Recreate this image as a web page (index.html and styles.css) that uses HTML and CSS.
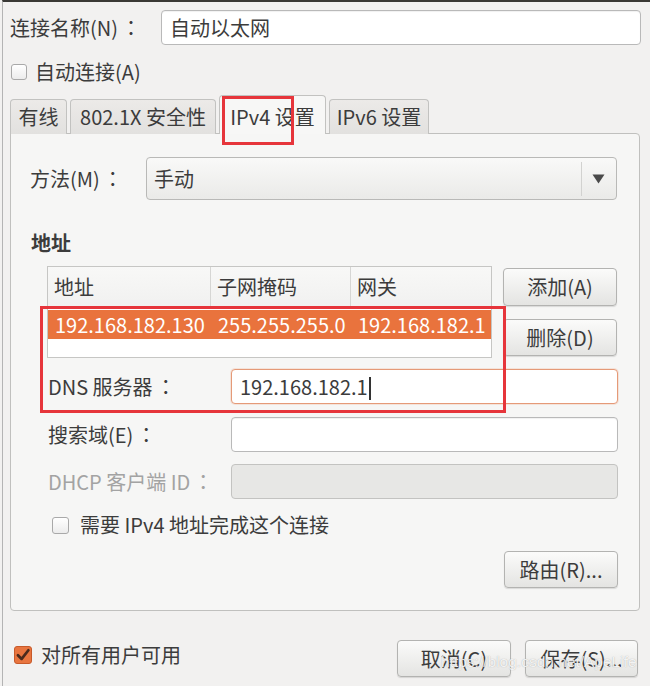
FILE: index.html
```html
<!DOCTYPE html>
<html lang="zh-CN">
<head>
<meta charset="utf-8">
<link rel="stylesheet" href="styles.css">
</head>
<body>
<div class="window">
  <div class="row-name">
    <div class="lbl lbl-name">连接名称(N)<span class="colon" lang="ja">：</span></div>
    <div class="entry entry-name">自动以太网</div>
  </div>
  <div class="row-auto">
    <span class="check"></span>
    <span class="lbl">自动连接(A)</span>
  </div>
  <div class="tabs">
    <div class="tab tab-wired">有线</div>
    <div class="tab tab-8021x">802.1X 安全性</div>
    <div class="tab tab-active">IPv4 设置</div>
    <div class="tab tab-ipv6">IPv6 设置</div>
  </div>
  <div class="panel">
    <div class="row-method">
      <div class="lbl lbl-method">方法(M)<span class="colon" lang="ja">：</span></div>
      <div class="combo">
        <span class="combo-text">手动</span>
        <span class="combo-sep"></span>
        <svg class="combo-arrow" width="13" height="10" viewBox="0 0 13 10"><path d="M0.5 0.5 H12.5 L6.5 9.5 Z" fill="#4a4a4a"/></svg>
      </div>
    </div>
    <div class="heading">地址</div>
    <div class="addr">
      <div class="table">
        <div class="thead">
          <div class="th th-addr">地址</div>
          <div class="th th-mask">子网掩码</div>
          <div class="th th-gw">网关</div>
        </div>
        <div class="trow">
          <div class="td td-addr">192.168.182.130</div>
          <div class="td td-mask">255.255.255.0</div>
          <div class="td td-gw">192.168.182.1</div>
        </div>
      </div>
      <div class="addr-btns">
        <div class="btn btn-add">添加(A)</div>
        <div class="btn btn-del">删除(D)</div>
      </div>
    </div>
    <div class="frow frow-dns">
      <div class="lbl flbl">DNS 服务器<span class="colon" lang="ja">：</span></div>
      <div class="entry fentry focus">192.168.182.1<span class="caret"></span></div>
    </div>
    <div class="frow frow-search">
      <div class="lbl flbl">搜索域(E)<span class="colon" lang="ja">：</span></div>
      <div class="entry fentry"></div>
    </div>
    <div class="frow frow-dhcp">
      <div class="lbl flbl disabled">DHCP 客户端 ID<span class="colon" lang="ja">：</span></div>
      <div class="entry fentry entry-disabled"></div>
    </div>
    <div class="row-require">
      <span class="check"></span>
      <span class="lbl">需要 IPv4 地址完成这个连接</span>
    </div>
    <div class="row-route">
      <div class="btn btn-route">路由(R)...</div>
    </div>
  </div>
  <div class="bottom">
    <div class="bottom-left">
      <span class="check checked"><svg width="18" height="18" viewBox="0 0 16 16"><path d="M3.5 8.2 L6.8 11.5 L12.8 3.8" fill="none" stroke="#4a2a1c" stroke-width="2.4" stroke-linecap="round" stroke-linejoin="round"/></svg></span>
      <span class="lbl">对所有用户可用</span>
    </div>
    <div class="bottom-btns">
      <div class="btn btn-cancel">取消(C)</div>
      <div class="btn btn-save">保存(S)...</div>
    </div>
  </div>
  <div class="mark mark-tab"></div>
  <div class="mark mark-addr"></div>
  <div class="watermark">https://blog.csdn.net/ApeLife</div>
</div>
</body>
</html>
```

FILE: styles.css
```css
html, body {
  margin: 0;
  padding: 0;
}
body {
  width: 650px;
  height: 686px;
  overflow: hidden;
  background: #f2f1f0;
  font-family: "Noto Sans CJK SC", "Noto Sans", "DejaVu Sans", sans-serif;
  font-size: 20px;
  color: #3c3c3c;
}
.window {
  position: relative;
  box-sizing: border-box;
  height: 686px;
  margin-left: 2px;
  border-top: 2px solid #3a3935;
  border-left: 1px solid #b4b4b4;
  padding: 8px 10px 0 7px;
}
.lbl {
  line-height: 24px;
  white-space: nowrap;
}
.colon {
  font-family: "Noto Sans CJK JP", "Noto Sans CJK SC", sans-serif;
  margin-left: 3px;
}
.disabled {
  color: #a3a3a3;
}
.entry {
  box-sizing: border-box;
  height: 35px;
  border: 1px solid #b9b9b9;
  border-radius: 4px;
  background: #ffffff;
  box-shadow: inset 0 1px 1px rgba(0,0,0,0.06);
  padding: 0 8px;
  line-height: 33px;
  color: #3c3c3c;
  white-space: nowrap;
}
.row-name {
  display: flex;
  align-items: center;
  height: 35px;
}
.lbl-name {
  width: 151px;
  flex: none;
}
.entry-name {
  flex: 1;
  margin-right: -1px;
}
.row-auto {
  display: flex;
  align-items: center;
  height: 34px;
  margin-top: 10px;
  padding-left: 1px;
}
.check {
  position: relative;
  box-sizing: border-box;
  width: 16px;
  height: 16px;
  flex: none;
  border: 1px solid #a9a9a9;
  border-radius: 3px;
  background: linear-gradient(#ffffff, #ececec);
  margin-right: 8px;
}
.check.checked {
  background: #e8753f;
  border-color: #c75a2a;
}
.check.checked svg {
  position: absolute;
  left: -1px;
  top: -1px;
}
.tabs {
  display: flex;
  align-items: flex-end;
  height: 38px;
  margin-top: 6px;
  position: relative;
  z-index: 2;
}
.tab {
  box-sizing: border-box;
  height: 35px;
  margin-bottom: -1px;
  border: 1px solid #c2c2c0;
  border-bottom: none;
  border-radius: 4px 4px 0 0;
  background: linear-gradient(#eceae8, #e2e1df);
  line-height: 33px;
  text-align: center;
  white-space: nowrap;
  margin-right: 3px;
}
.tab-wired { width: 57px; }
.tab-8021x { width: 146px; }
.tab-active {
  width: 107px;
  height: 39px;
  background: #f7f7f6;
  padding-top: 4px;
  line-height: 33px;
}
.tab-ipv6 { width: 100px; }
.panel {
  box-sizing: border-box;
  width: 630px;
  height: 478px;
  border: 1px solid #c0c0be;
  border-radius: 0 4px 4px 4px;
  background: #f6f6f5;
  padding: 23px 22px 0 19px;
  position: relative;
  z-index: 1;
}
.row-method {
  display: flex;
  align-items: center;
  height: 43px;
}
.lbl-method {
  width: 116px;
  flex: none;
}
.combo {
  flex: 1;
  box-sizing: border-box;
  height: 43px;
  border: 1px solid #b9b9b7;
  border-radius: 4px;
  background: linear-gradient(#f9f9f8, #eaeae8);
  display: flex;
  align-items: center;
  padding-left: 7px;
}
.combo-text {
  flex: 1;
  line-height: 24px;
}
.combo-sep {
  width: 1px;
  height: 34px;
  background: #d2d2d0;
  margin-right: 10px;
}
.combo-arrow {
  margin-right: 11px;
}
.heading {
  font-weight: bold;
  margin-top: 30px;
  line-height: 26px;
  padding-left: 1px;
}
.addr {
  display: flex;
  margin-top: 10px;
  margin-left: 17px;
}
.table {
  box-sizing: border-box;
  width: 445px;
  height: 92px;
  border: 1px solid #c6c6c4;
  background: #ffffff;
}
.thead {
  display: flex;
  height: 39px;
  background: linear-gradient(#f8f8f7, #f1f1f0);
  border-bottom: 1px solid #dcdcda;
}
.th {
  box-sizing: border-box;
  line-height: 39px;
  padding-left: 6px;
  border-right: 1px solid #d6d6d4;
}
.th-addr { width: 163px; }
.th-mask { width: 140px; }
.th-gw { flex: 1; border-right: none; }
.trow {
  display: flex;
  height: 29px;
  margin-top: 3px;
  background: #e9733d;
  color: #ffffff;
}
.td {
  line-height: 29px;
  padding-left: 7px;
  white-space: nowrap;
}
.td-addr { width: 156px; }
.td-mask { width: 133px; }
.td-gw { flex: 1; }
.addr-btns {
  display: flex;
  flex-direction: column;
  margin-left: 11px;
  padding-top: 2px;
}
.btn {
  box-sizing: border-box;
  width: 114px;
  height: 38px;
  border: 1px solid #b3b3b1;
  border-radius: 4px;
  background: linear-gradient(#fbfbfa, #e4e4e2);
  box-shadow: 0 1px 1px rgba(0,0,0,0.12);
  text-align: center;
  line-height: 36px;
  white-space: nowrap;
}
.btn-del {
  margin-top: 13px;
  height: 37px;
}
.frow {
  display: flex;
  align-items: center;
  margin-left: 18px;
}
.frow-dns { margin-top: 11px; }
.frow-search { margin-top: 13px; }
.frow-dhcp { margin-top: 12px; }
.flbl {
  width: 183px;
  flex: none;
}
.fentry {
  flex: 1;
  margin-right: -1px;
}
.focus {
  border-color: #e59a78;
  box-shadow: 0 0 0 1px rgba(233,120,70,0.15);
}
.caret {
  display: inline-block;
  width: 2px;
  height: 23px;
  background: #333333;
  vertical-align: -5px;
  margin-left: 1px;
}
.entry-disabled {
  background: #e7e7e5;
  border-color: #c3c3c1;
  box-shadow: none;
}
.row-require {
  display: flex;
  align-items: center;
  height: 36px;
  margin-top: 8px;
  margin-left: 22px;
}
.row-require .check {
  width: 17px;
  height: 17px;
  margin-right: 11px;
}
.row-route {
  display: flex;
  justify-content: flex-end;
  margin-top: 8px;
  margin-right: -1px;
}
.btn-route {
  height: 37px;
}
.bottom {
  display: flex;
  justify-content: space-between;
  align-items: center;
  margin-top: 29px;
  margin-right: 2px;
}
.bottom-left {
  display: flex;
  align-items: center;
  padding-left: 4px;
  padding-bottom: 7px;
}
.bottom-left .check {
  width: 18px;
  height: 18px;
  margin-right: 9px;
}
.bottom-btns {
  display: flex;
  gap: 14px;
}
.btn-cancel, .btn-save {
  height: 37px;
  width: 114px;
}
.btn-save { width: 113px; }
.mark {
  position: absolute;
  box-sizing: border-box;
  border: 3px solid #e6353b;
  z-index: 5;
}
.mark-tab {
  left: 219px;
  top: 94px;
  width: 72px;
  height: 49px;
}
.mark-addr {
  left: 37px;
  top: 304px;
  width: 466px;
  height: 107px;
}
.watermark {
  position: absolute;
  left: 438px;
  top: 649px;
  z-index: 6;
  font-family: "Liberation Sans", "DejaVu Sans", sans-serif;
  font-size: 15.5px;
  line-height: 22px;
  color: rgba(255,255,255,0.85);
  text-shadow: 0 0 1px rgba(120,120,120,0.6);
  white-space: nowrap;
}
```
